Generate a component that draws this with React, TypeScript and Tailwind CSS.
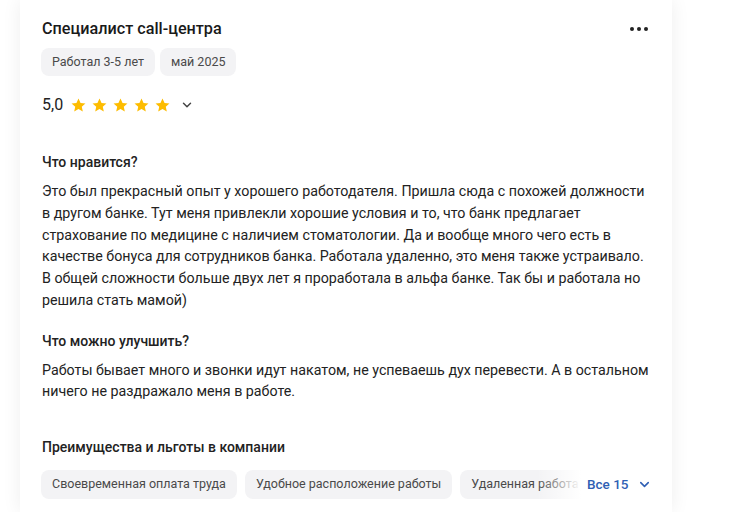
import { ChevronDown } from "lucide-react";

const Star = () => (
  <svg viewBox="0 0 24 24" className="w-[17px] h-[17px]" fill="#fdbc00">
    <path d="M12 2.2l2.9 6.3 6.9.7-5.2 4.6 1.5 6.8L12 17.1l-6.1 3.5 1.5-6.8L2.2 9.2l6.9-.7z" />
  </svg>
);

const Chip = ({ children }: { children: string }) => (
  <span className="shrink-0 h-[29px] px-[11px] flex items-center rounded-[8px] bg-[#f3f3f5] text-[12.5px] text-[#4a4a4a] whitespace-nowrap">
    {children}
  </span>
);

const App = () => {
  return (
    <div className="min-h-screen bg-white font-['Roboto',sans-serif] text-[#222]">
      <div className="ml-[20px] w-[652px] min-h-[512px] bg-white shadow-[0_0_18px_rgba(0,0,0,0.07)] pt-[17px] pl-[22px] pr-[24px]">
        <div className="flex flex-row justify-between items-center">
          <h1 className="text-[16.2px] leading-[24px] font-medium text-[#1a1a1a]">
            Специалист call-центра
          </h1>
          <div className="flex flex-row gap-[3px] items-center">
            <span className="w-[4px] h-[4px] rounded-full bg-[#222]" />
            <span className="w-[4px] h-[4px] rounded-full bg-[#222]" />
            <span className="w-[4px] h-[4px] rounded-full bg-[#222]" />
          </div>
        </div>

        <div className="flex flex-row gap-[5px] mt-[7px] -ml-[1px]">
          <span className="h-[28px] px-[11px] flex items-center rounded-[8px] bg-[#f3f3f5] text-[12.5px] text-[#4a4a4a]">
            Работал 3-5 лет
          </span>
          <span className="h-[28px] px-[11px] flex items-center rounded-[8px] bg-[#f3f3f5] text-[12.5px] text-[#4a4a4a]">
            май 2025
          </span>
        </div>

        <div className="flex flex-row items-center mt-[17px] h-[24px]">
          <span className="text-[16px] mr-[7px]">5,0</span>
          <div className="flex flex-row gap-[4px]">
            <Star />
            <Star />
            <Star />
            <Star />
            <Star />
          </div>
          <ChevronDown className="ml-[9px] w-[14px] h-[14px] text-[#444]" strokeWidth={2.5} />
        </div>

        <h2 className="mt-[35px] text-[14px] leading-[20px] font-medium">Что нравится?</h2>
        <p className="mt-[9px] text-[14.25px] leading-[21.8px] whitespace-nowrap">
          Это был прекрасный опыт у хорошего работодателя. Пришла сюда с похожей должности
          <br />
          в другом банке. Тут меня привлекли хорошие условия и то, что банк предлагает
          <br />
          страхование по медицине с наличием стоматологии. Да и вообще много чего есть в
          <br />
          качестве бонуса для сотрудников банка. Работала удаленно, это меня также устраивало.
          <br />
          В общей сложности больше двух лет я проработала в альфа банке. Так бы и работала но
          <br />
          решила стать мамой)
        </p>

        <h2 className="mt-[19px] text-[14px] leading-[20px] font-medium">Что можно улучшить?</h2>
        <p className="mt-[9px] text-[14.25px] leading-[21.5px] whitespace-nowrap">
          Работы бывает много и звонки идут накатом, не успеваешь дух перевести. А в остальном
          <br />
          ничего не раздражало меня в работе.
        </p>

        <h2 className="mt-[34px] text-[14px] leading-[20px] font-medium">
          Преимущества и льготы в компании
        </h2>
        <div className="flex flex-row items-center mt-[13px] -ml-[1px]">
          <div className="relative w-[540px] shrink-0 overflow-hidden">
            <div className="flex flex-row gap-[8px]">
              <Chip>Своевременная оплата труда</Chip>
              <Chip>Удобное расположение работы</Chip>
              <Chip>Удаленная работа</Chip>
            </div>
            <div className="absolute right-0 top-0 h-full w-[44px] bg-gradient-to-r from-transparent to-white" />
          </div>
          <button className="ml-[6px] shrink-0 whitespace-nowrap flex flex-row items-center text-[13.5px] font-medium text-[#2f5fb4]">
            Все 15
            <ChevronDown className="ml-[8px] w-[15px] h-[15px]" strokeWidth={2.5} />
          </button>
        </div>
      </div>
    </div>
  );
};

export default App;
